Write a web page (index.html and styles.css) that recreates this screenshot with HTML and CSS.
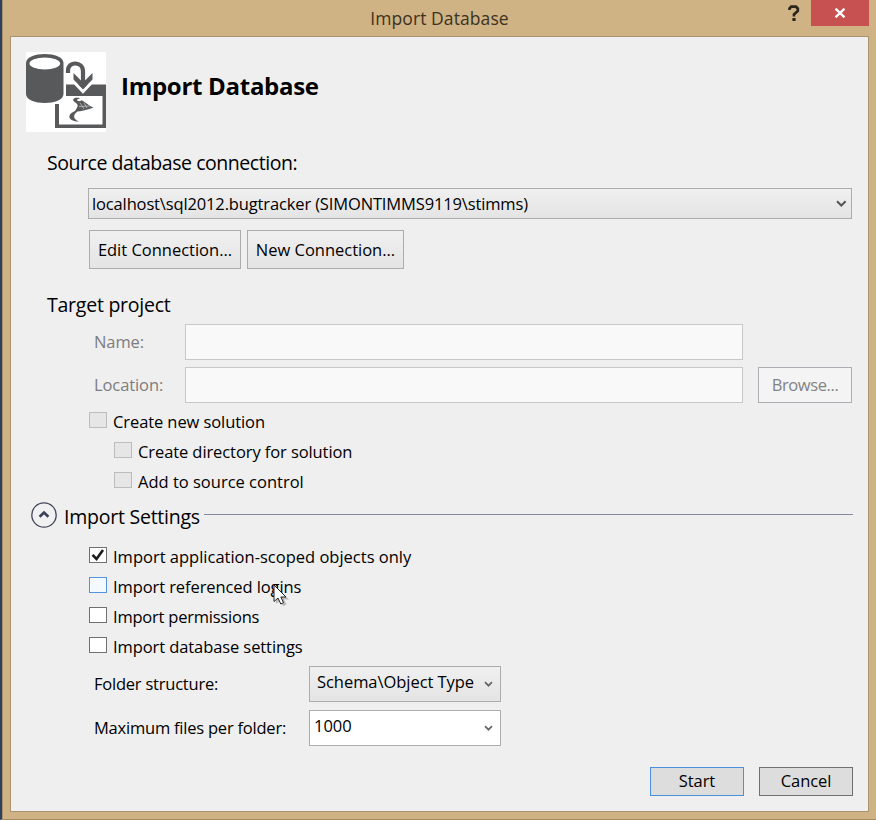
FILE: index.html
```html
<!DOCTYPE html>
<html lang="en">
<head>
<meta charset="utf-8">
<title>Import Database</title>
<link rel="stylesheet" href="styles.css">
</head>
<body>
<div class="window">
  <header class="titlebar">
    <span class="title">Import Database</span>
    <div class="window-buttons">
      <span class="help">
        <svg width="12" height="17" viewBox="0 0 12 17"><path d="M1.5 5V3.6L3.2 1.7H8L9.8 3.6V6L6 9.4V11.4" fill="none" stroke="#2b261c" stroke-width="2.7"/><rect x="4.4" y="13" width="3.2" height="3" fill="#2b261c"/></svg>
      </span>
      <span class="close">
        <svg width="12" height="10" viewBox="0 0 12 10"><path d="M1.5 .7L10.5 9.3M10.5 .7L1.5 9.3" stroke="#fff" stroke-width="2.4"/></svg>
      </span>
    </div>
  </header>
  <main class="panel">
    <div class="heading">
      <svg class="logo" width="80" height="80" viewBox="0 0 80 80">
        <rect width="80" height="80" fill="#fff"/>
        <path d="M0 11C0 -1 37.5 -1 37.5 11V42C37.5 54 0 54 0 42Z" fill="#58595b"/>
        <ellipse cx="18.8" cy="11.4" rx="15.3" ry="6" fill="#fff"/>
        <path d="M40 32.5H80V76H29V52H33V72.5H76.5V44H40Z" fill="#58595b"/>
        <path d="M45 27L57 39.5L69 27" fill="none" stroke="#fff" stroke-width="3"/>
        <path d="M47.5 21L57 30.5L66.5 21V27.5L57 37L47.5 27.5Z" fill="#58595b"/>
        <path d="M42 21V18.5C42 9 57 9 57 19.5V33" fill="none" stroke="#58595b" stroke-width="4.2"/>
        <path d="M54 46.3C49 44.8 45.5 47 48 49.5C52 52 52.5 53.5 50.5 56.5L49 59C40.5 62.5 41.5 69.5 53 69.5C46.5 67 47 62.5 51.5 59.5C57 59 62 57.5 67.5 55.5C63 54 57 48.5 55.5 48.3C54 50 51 49 50.8 47.8Z" fill="#58595b"/>
        <path d="M54 51L58 57M58 51L61 56M53 54.5L64 54" stroke="#ccc" stroke-width=".7"/>
      </svg>
      <h1>Import Database</h1>
    </div>

    <h2 class="source-title"><span>Source database connection:</span></h2>
    <div class="select source"><span>localhost\sql2012.bugtracker (SIMONTIMMS9119\stimms)</span>
      <svg width="11" height="8" viewBox="0 0 11 8"><path d="M1 1.2L5.3 5.5L9.6 1.2" fill="none" stroke="#555" stroke-width="2"/></svg>
    </div>
    <div class="connection-buttons">
      <button class="edit"><span>Edit Connection...</span></button>
      <button class="new"><span>New Connection...</span></button>
    </div>

    <h2 class="target-title"><span>Target project</span></h2>
    <div class="fields">
      <label>Name:</label><div class="input"></div><span></span>
      <label>Location:</label><div class="input"></div><button class="browse" disabled>Browse...</button>
    </div>
    <div class="checks target-checks">
      <div class="check off"><i></i><span>Create new solution</span></div>
      <div class="check off nested"><i></i><span>Create directory for solution</span></div>
      <div class="check off nested"><i></i><span class="wide">Add to source control</span></div>
    </div>

    <div class="expander">
      <svg width="26" height="26" viewBox="0 0 26 26"><circle cx="13" cy="13" r="12.2" fill="#f1f1f2" stroke="#42475a" stroke-width="1.3"/><path d="M8.6 14.8L13 10.6L17.4 14.8" fill="none" stroke="#3c4256" stroke-width="2.6"/></svg>
      <h2><span>Import Settings</span></h2>
      <div class="rule"></div>
    </div>
    <div class="checks import-checks">
      <div class="check"><i><svg width="16" height="14" viewBox="0 0 16 14"><path d="M2.5 6.8L6.5 11L13 2" fill="none" stroke="#1c1c1c" stroke-width="2.6"/></svg></i><span class="wide">Import application-scoped objects only</span></div>
      <div class="check hover"><i></i><span>Import referenced logins</span>
        <svg class="cursor" width="17" height="24" viewBox="0 0 17 24"><path d="M3 3V20L7 16.5L10 22L13.5 20.5L11 15.5H16Z" fill="#777" opacity=".45"/><path d="M1 1V17.5L5 14L7.8 20L10.5 18.7L7.8 13H13Z" fill="#fff" stroke="#222" stroke-width="1"/></svg>
      </div>
      <div class="check"><i></i><span class="tight">Import permissions</span></div>
      <div class="check"><i></i><span>Import database settings</span></div>
    </div>
    <div class="options">
      <label class="tight">Folder structure:</label>
      <div class="select"><span>Schema\Object Type</span><svg width="9" height="7" viewBox="0 0 9 7"><path d="M1 1.2L4.5 4.7L8 1.2" fill="none" stroke="#666" stroke-width="1.7"/></svg></div>
      <label class="tight">Maximum files per folder:</label>
      <div class="select white"><span>1000</span><svg width="9" height="7" viewBox="0 0 9 7"><path d="M1 1.2L4.5 4.7L8 1.2" fill="none" stroke="#666" stroke-width="1.7"/></svg></div>
    </div>
    <footer>
      <button class="start">Start</button>
      <button class="cancel">Cancel</button>
    </footer>
  </main>
</div>
</body>
</html>
```
FILE: styles.css
```css
* { box-sizing: border-box; }
body { margin: 0; font-family: "Open Sans", "Noto Sans", sans-serif; font-size: 16.5px; letter-spacing: -0.09px; color: #000; }
svg { display: block; flex: none; }
.window { width: 876px; height: 820px; background: #d0b384; border-left: 2px solid #30415f; border-bottom: 1px solid #a48b62; box-shadow: inset 1px 0 #a9936c; padding: 0 7px 7px 8px; overflow: hidden; }
.titlebar { height: 36px; position: relative; display: flex; justify-content: center; }
.title { font-size: 17.5px; line-height: 36px; letter-spacing: 0.08px; color: #3b3222; }
.window-buttons { position: absolute; right: 0; top: 0; display: flex; }
.help { padding: 5px 11px 0 0; }
.close { width: 58px; height: 26px; background: #c75050; display: flex; align-items: center; justify-content: center; }
.panel { height: 776px; background: #efefef; border: 1px solid #a8946f; padding: 15px 15px 0; }
.heading { display: flex; align-items: center; gap: 15px; height: 80px; }
h1, h2 { margin: 0; }
h1 { font-size: 24px; line-height: 34px; letter-spacing: -0.29px; padding-bottom: 13px; }
h2 { font-size: 19.5px; font-weight: 400; line-height: 28px; letter-spacing: -0.24px; }
.source-title { margin: 17px 0 11px 21px; letter-spacing: -0.45px; }
.select { border: 1px solid #acacac; background: linear-gradient(#f0f0f0, #e4e4e4); display: flex; align-items: center; justify-content: space-between; }
.source { margin-left: 62px; height: 31px; padding: 0 4px 0 3px; width: 764px; letter-spacing: -0.14px; }
button { font: inherit; letter-spacing: inherit; color: #000; padding: 0; border: 1px solid #acacac; background: linear-gradient(#f0f0f0, #e4e4e4); white-space: nowrap; }
.connection-buttons { display: flex; gap: 6px; margin: 11px 0 0 63px; letter-spacing: -0.01px; }
.connection-buttons button { height: 39px; }
.edit { width: 152px; }
.new { width: 157px; }
.target-title { margin: 22px 0 5px 21px; }
.fields { display: grid; grid-template-columns: 91px 558px 94px; grid-template-rows: 36px 36px; row-gap: 7px; margin-left: 68px; align-items: center; color: #7d7d7d; }
.fields label, .options label { padding-bottom: 2px; }
.input { height: 36px; border: 1px solid #c8c8c8; background: #f9f9f9; }
.browse { height: 36px; margin-left: 15px; width: 94px; padding-bottom: 2px; letter-spacing: -0.4px; color: #838383; background: #f4f4f4; border-color: #acaeb3; }
.checks { margin-left: 63px; }
.check { height: 30px; display: flex; align-items: flex-start; gap: 6px; line-height: 20px; position: relative; }
.check i { width: 18px; height: 16px; border: 1px solid #707070; background: #fff; flex: none; }
.check.off i { background: #e6e6e6; border-color: #bcbcbc; }
.check.hover i { background: #f3f9ff; border-color: #5592dd; }
.wide { letter-spacing: 0; }
.tight { letter-spacing: -0.22px; }
.nested { margin-left: 25px; }
.target-checks { padding-top: 9px; }
.cursor { position: absolute; left: 184px; top: 7px; }
.expander { display: flex; align-items: center; height: 26px; margin-left: 5px; width: 822px; }
.expander h2 { margin: 4px 4px 0 7px; }
.rule { flex: 1; height: 1px; margin-bottom: 2px; background: #858aa3; }
.import-checks { padding-top: 19px; }
.options { display: grid; grid-template-columns: 215px 192px; grid-template-rows: 36px 36px; row-gap: 8px; margin-left: 68px; margin-top: -1px; align-items: center; }
.options .select { height: 36px; padding: 0 7px; letter-spacing: -0.05px; }
.options .select span { padding-bottom: 5px; }
.options .white { background: #fff; padding-left: 4px; }
.options .white span { padding-bottom: 6px; }
footer { display: flex; justify-content: flex-end; gap: 15px; margin-top: 21px; }
footer button { width: 94px; height: 29px; padding-bottom: 2px; background: #dddddd; border-color: #707070; }
.start { border-color: #4a90dc; }
```
